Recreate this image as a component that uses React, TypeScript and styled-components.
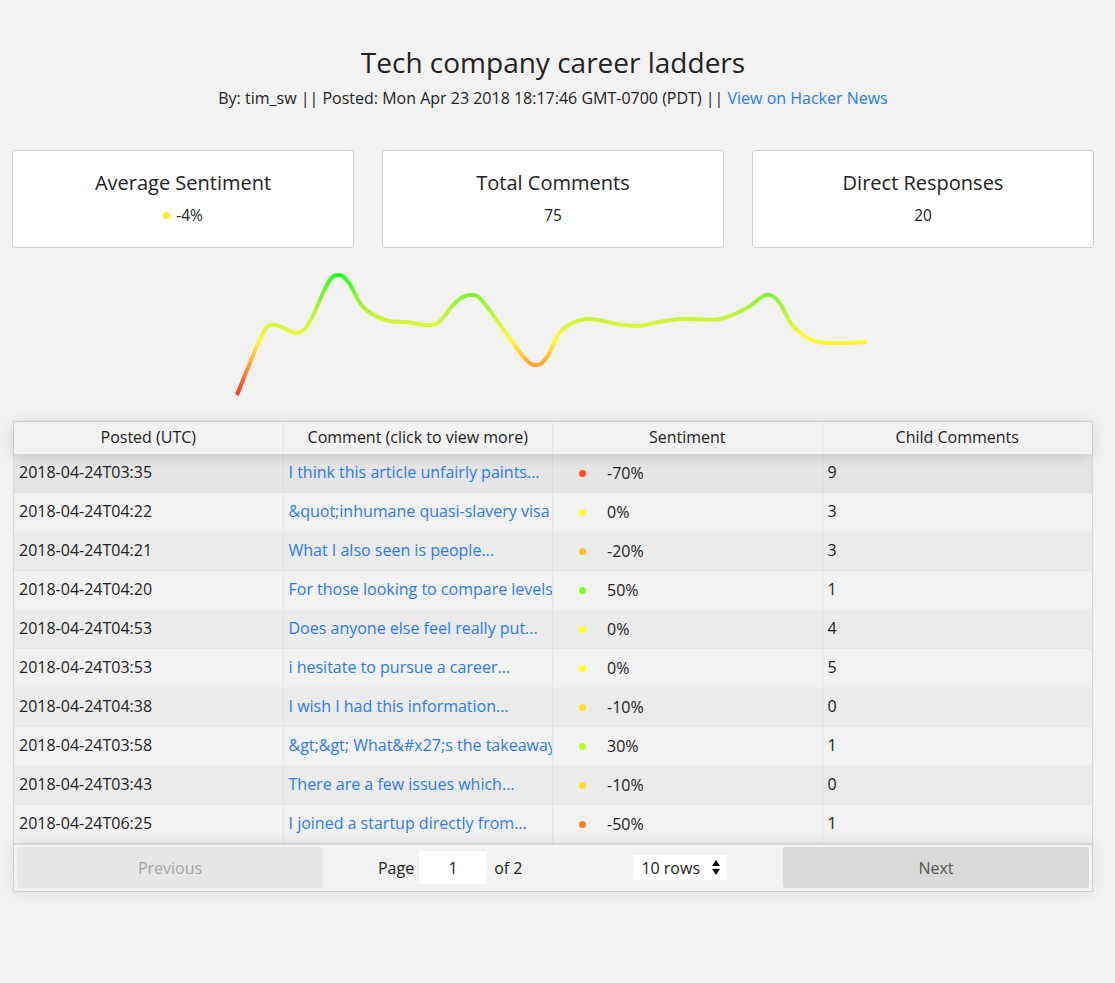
import React from "react";
import styled, { createGlobalStyle } from "styled-components";

const GlobalStyle = createGlobalStyle`
  html, body { margin: 0; padding: 0; background: #f2f2f2; }
  body { font-family: "Open Sans", "Noto Sans", sans-serif; color: #222; }
  * { box-sizing: border-box; }
`;

const Page = styled.div`
  width: 1115px;
  padding: 42px 21px 80px 12px;
`;

const Header = styled.header`
  text-align: center;
`;

const Title = styled.h1`
  margin: 0;
  font-size: 28px;
  font-weight: 400;
  line-height: 40px;
  color: #222;
`;

const Byline = styled.p`
  margin: 5px 0 0;
  font-size: 16px;
  line-height: 22px;
  color: #222;
`;

const Link = styled.a`
  color: #2a7af5;
  text-decoration: none;
  cursor: pointer;
`;

const Cards = styled.div`
  margin-top: 41px;
  display: grid;
  grid-template-columns: repeat(3, 342px);
  column-gap: 28px;
`;

const Card = styled.div`
  height: 98px;
  background: #fff;
  border: 1px solid #d0d0d0;
  border-radius: 3px;
  display: flex;
  flex-direction: column;
  align-items: center;
  padding-top: 18px;
`;

const CardTitle = styled.div`
  font-size: 20px;
  line-height: 27px;
  color: #222;
`;

const CardValue = styled.div`
  margin-top: 8px;
  font-size: 15.5px;
  line-height: 22px;
  color: #222;
  display: flex;
  align-items: center;
  gap: 6px;
`;

const Dot = styled.span<{ $color: string }>`
  display: inline-block;
  flex: none;
  width: 7px;
  height: 7px;
  border-radius: 50%;
  background: ${(p) => p.$color};
`;

const ChartWrap = styled.div`
  height: 173px;
  margin-left: -12px;
`;

const Table = styled.div`
  margin: 0 1px;
  border: 1px solid rgba(0, 0, 0, 0.1);
  display: flex;
  flex-direction: column;
`;

const HeadRow = styled.div`
  display: grid;
  grid-template-columns: repeat(4, 1fr);
  height: 32px;
  box-shadow: 0 2px 15px 0 rgba(0, 0, 0, 0.15);
  position: relative;
  z-index: 1;
  background: #f2f2f2;
`;

const HeadCell = styled.div`
  text-align: center;
  font-size: 16px;
  line-height: 31px;
  border-right: 1px solid rgba(0, 0, 0, 0.05);
  color: #222;
  &:last-child { border-right: none; }
`;

const Row = styled.div<{ $tone: "hover" | "odd" | "even" }>`
  display: grid;
  grid-template-columns: repeat(4, 1fr);
  height: 39px;
  border-bottom: 1px solid rgba(0, 0, 0, 0.02);
  background: ${(p) =>
    p.$tone === "hover" ? "#e5e5e5" : p.$tone === "odd" ? "#ebebeb" : "#f2f2f2"};
`;

const Cell = styled.div`
  padding: 0 5px;
  font-size: 16px;
  line-height: 37px;
  white-space: nowrap;
  overflow: hidden;
  border-right: 1px solid rgba(0, 0, 0, 0.05);
  color: #222;
  &:last-child { border-right: none; }
`;

const SentimentCell = styled(Cell)`
  display: flex;
  align-items: center;
  padding-left: 26px;
  gap: 21px;
`;

const Pagination = styled.div`
  display: flex;
  align-items: center;
  margin-top: -1px;
  padding: 2px 3px 3px;
  border-top: 2px solid rgba(0, 0, 0, 0.1);
  box-shadow: 0 0 15px 0 rgba(0, 0, 0, 0.1);
  height: 48px;
`;

const NavButton = styled.button<{ $disabled?: boolean }>`
  flex: none;
  width: 306px;
  height: 41px;
  padding: 0;
  border: none;
  border-radius: 3px;
  font-family: inherit;
  font-size: 16px;
  background: ${(p) => (p.$disabled ? "#e6e6e6" : "#d9d9d9")};
  color: ${(p) => (p.$disabled ? "#a6a6a6" : "#555")};
  cursor: ${(p) => (p.$disabled ? "default" : "pointer")};
`;

const Center = styled.div`
  flex: 1;
  display: flex;
  align-items: center;
  justify-content: space-around;
`;

const PageInfo = styled.div`
  display: flex;
  align-items: center;
  font-size: 16px;
  color: #222;
`;

const PageInput = styled.input`
  width: 70px;
  height: 35px;
  margin: 0 6px 0 4px;
  border: 1px solid rgba(0, 0, 0, 0.06);
  border-radius: 3px;
  background: #fff;
  text-align: center;
  font-family: inherit;
  font-size: 16px;
  color: #222;
  outline: none;
`;

const RowsSelect = styled.div`
  display: flex;
  align-items: center;
  gap: 12px;
  height: 27px;
  padding: 0 7px 0 8px;
  background: #fff;
  border: 1px solid rgba(0, 0, 0, 0.06);
  border-radius: 4px;
  font-size: 16px;
  color: #222;
`;

type Row = { date: string; text: string; sent: number; color: string; kids: number };

const rows: Row[] = [
  { date: "2018-04-24T03:35", text: "I think this article unfairly paints...", sent: -70, color: "#ff4d26", kids: 9 },
  { date: "2018-04-24T04:22", text: "&quot;inhumane quasi-slavery visa", sent: 0, color: "#ffff26", kids: 3 },
  { date: "2018-04-24T04:21", text: "What I also seen is people...", sent: -20, color: "#ffbf26", kids: 3 },
  { date: "2018-04-24T04:20", text: "For those looking to compare levels", sent: 50, color: "#80ff26", kids: 1 },
  { date: "2018-04-24T04:53", text: "Does anyone else feel really put...", sent: 0, color: "#ffff26", kids: 4 },
  { date: "2018-04-24T03:53", text: "i hesitate to pursue a career...", sent: 0, color: "#ffff26", kids: 5 },
  { date: "2018-04-24T04:38", text: "I wish I had this information...", sent: -10, color: "#ffdf26", kids: 0 },
  { date: "2018-04-24T03:58", text: "&gt;&gt; What&#x27;s the takeaway", sent: 30, color: "#b3ff26", kids: 1 },
  { date: "2018-04-24T03:43", text: "There are a few issues which...", sent: -10, color: "#ffdf26", kids: 0 },
  { date: "2018-04-24T06:25", text: "I joined a startup directly from...", sent: -50, color: "#ff8026", kids: 1 },
];

const pts: [number, number][] = [
  [237, 395], [262, 335], [275, 325], [296, 333], [309, 323], [328, 283], [339, 275],
  [349, 283], [363, 307], [385, 320], [406, 322], [427, 325], [439, 322], [456, 302],
  [470, 295], [484, 303], [522, 355], [536, 365], [547, 357], [562, 330], [587, 319],
  [617, 324], [638, 326], [659, 322], [684, 319], [720, 319], [747, 308], [766, 295],
  [779, 302], [794, 327], [819, 342], [867, 342],
];

function smoothPath(p: [number, number][]): string {
  let d = `M${p[0][0]},${p[0][1]}`;
  for (let i = 0; i < p.length - 1; i++) {
    const p0 = p[i - 1] || p[i];
    const p1 = p[i];
    const p2 = p[i + 1];
    const p3 = p[i + 2] || p2;
    const t = 6;
    const c1x = p1[0] + (p2[0] - p0[0]) / t;
    const c1y = p1[1] + (p2[1] - p0[1]) / t;
    const c2x = p2[0] - (p3[0] - p1[0]) / t;
    const c2y = p2[1] - (p3[1] - p1[1]) / t;
    d += ` C${c1x.toFixed(1)},${c1y.toFixed(1)} ${c2x.toFixed(1)},${c2y.toFixed(1)} ${p2[0]},${p2[1]}`;
  }
  return d;
}

const OFFSET_Y = 248;

function Chart() {
  const shifted = pts.map(([x, y]) => [x, y - OFFSET_Y] as [number, number]);
  return (
    <svg width="1115" height="165" viewBox="0 0 1115 165">
      <defs>
        <linearGradient id="sent" gradientUnits="userSpaceOnUse" x1="0" y1={400 - OFFSET_Y} x2="0" y2={272 - OFFSET_Y}>
          <stop offset="0" stopColor="#ff1a1a" />
          <stop offset="0.25" stopColor="#ff9933" />
          <stop offset="0.47" stopColor="#ffff33" />
          <stop offset="0.6" stopColor="#d6f53a" />
          <stop offset="0.8" stopColor="#8ef23a" />
          <stop offset="1" stopColor="#1aff1a" />
        </linearGradient>
      </defs>
      <path d={smoothPath(shifted)} fill="none" stroke="url(#sent)" strokeWidth="4" />
    </svg>
  );
}

function Arrows() {
  return (
    <svg width="8" height="15" viewBox="0 0 8 15">
      <path d="M4 0 L8 6 L0 6 Z" fill="#111" />
      <path d="M0 9 L8 9 L4 15 Z" fill="#111" />
    </svg>
  );
}

export default function App() {
  return (
    <>
      <GlobalStyle />
      <Page>
        <Header>
          <Title>Tech company career ladders</Title>
          <Byline>
            By: tim_sw || Posted: Mon Apr 23 2018 18:17:46 GMT-0700 (PDT) || <Link>View on Hacker News</Link>
          </Byline>
        </Header>
        <Cards>
          <Card>
            <CardTitle>Average Sentiment</CardTitle>
            <CardValue>
              <Dot $color="#ffee26" />
              -4%
            </CardValue>
          </Card>
          <Card>
            <CardTitle>Total Comments</CardTitle>
            <CardValue>75</CardValue>
          </Card>
          <Card>
            <CardTitle>Direct Responses</CardTitle>
            <CardValue>20</CardValue>
          </Card>
        </Cards>
        <ChartWrap>
          <Chart />
        </ChartWrap>
        <Table>
          <HeadRow>
            <HeadCell>Posted (UTC)</HeadCell>
            <HeadCell>Comment (click to view more)</HeadCell>
            <HeadCell>Sentiment</HeadCell>
            <HeadCell>Child Comments</HeadCell>
          </HeadRow>
          {rows.map((r, i) => (
            <Row key={i} $tone={i === 0 ? "hover" : i % 2 === 0 ? "odd" : "even"}>
              <Cell>{r.date}</Cell>
              <Cell>
                <Link>{r.text}</Link>
              </Cell>
              <SentimentCell>
                <Dot $color={r.color} />
                <span>{r.sent}%</span>
              </SentimentCell>
              <Cell>{r.kids}</Cell>
            </Row>
          ))}
          <Pagination>
            <NavButton $disabled>Previous</NavButton>
            <Center>
              <PageInfo>
                Page
                <PageInput defaultValue="1" />
                of 2
              </PageInfo>
              <RowsSelect>
                <span>10 rows</span>
                <Arrows />
              </RowsSelect>
            </Center>
            <NavButton>Next</NavButton>
          </Pagination>
        </Table>
      </Page>
    </>
  );
}
